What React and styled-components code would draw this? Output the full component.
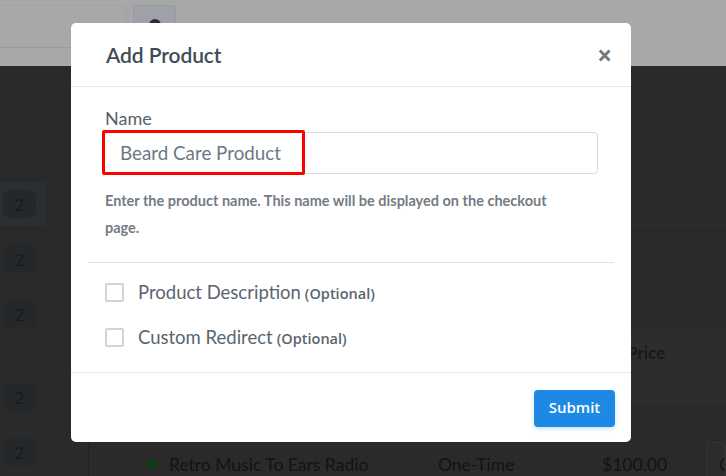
import React from "react";
import styled, { createGlobalStyle } from "styled-components";

const Global = createGlobalStyle`
  html, body { margin: 0; padding: 0; background: #2a2a2a; }
  body { font-family: "Lato", "Open Sans", sans-serif; overflow: hidden; }
  * { box-sizing: border-box; }
`;

const Page = styled.div`
  position: relative;
  width: 726px;
  height: 476px;
  overflow: hidden;
  display: flex;
  flex-direction: column;
  background: #2a2a2a;
`;

const TopBar = styled.div`
  height: 66px;
  flex: none;
  background: #a8a8a8;
  display: flex;
  align-items: flex-start;
  padding-top: 5px;
`;

const SearchField = styled.div`
  width: 127px;
  height: 43px;
  border-bottom: 1px solid #9a9a9a;
  border-right: 1px solid #9f9f9f;
  border-top: 1px solid #a1a1a1;
  border-top-right-radius: 3px;
`;

const SearchButton = styled.div`
  width: 43px;
  height: 43px;
  margin-left: 6px;
  background: #9ea2a8;
  border: 1px solid #9a9ca0;
  border-radius: 3px;
  display: flex;
  justify-content: center;
  padding-top: 13px;
`;

const SearchDot = styled.div`
  width: 12px;
  height: 12px;
  border-radius: 50%;
  background: #2a2d31;
`;

const Main = styled.div`
  flex: 1;
  display: flex;
  min-height: 0;
`;

const Sidebar = styled.div`
  width: 46px;
  flex: none;
  display: flex;
  flex-direction: column;
  padding-top: 93px;
`;

const SideLine = styled.div`
  height: 1px;
  background: #232323;
  margin-bottom: 23px;
`;

const SideRow = styled.div`
  height: 44px;
  flex: none;
  display: flex;
  align-items: center;
  padding-left: 3px;
  margin-bottom: ${(p) => p.$gap || 11}px;
  background: ${(p) => (p.$active ? "#2c2f31" : "transparent")};
`;

const Badge = styled.div`
  width: 33px;
  height: 28px;
  border-radius: 6px;
  background: #25282a;
  color: #17191a;
  font-family: "Open Sans", sans-serif;
  font-size: 17px;
  display: flex;
  align-items: center;
  justify-content: center;
`;

const Content = styled.div`
  flex: 1;
  margin-left: 42px;
  border-left: 1px solid #232323;
  display: flex;
  flex-direction: column;
`;

const TopSection = styled.div`
  height: 165px;
  border-bottom: 1px solid #232323;
  flex: none;
`;

const TableHead = styled.div`
  margin-top: 98px;
  height: 75px;
  flex: none;
  background: #2d2d2d;
  display: grid;
  grid-template-columns: 538px 1fr;
  align-items: start;
  padding-top: 13px;
`;

const HeadCell = styled.div`
  font-family: "Lato", sans-serif;
  font-weight: 700;
  font-size: 17px;
  color: #191919;
`;

const TableRow = styled.div`
  display: grid;
  grid-template-columns: 80px 269px 164px 104px 1fr;
  align-items: center;
  height: 44px;
  flex: none;
  margin-top: 38px;
  font-family: "Lato", sans-serif;
  font-size: 17.5px;
  color: #131313;
`;

const Dot = styled.div`
  justify-self: end;
  margin-right: 12px;
  width: 12px;
  height: 12px;
  border-radius: 50%;
  background: #183a18;
`;

const Cell = styled.div`
  white-space: nowrap;
`;

const CopyBtn = styled.div`
  height: 44px;
  border: 1px solid #353535;
  border-radius: 4px;
  background: #2c2c2c;
  padding-left: 12px;
  display: flex;
  align-items: center;
  color: #161616;
  overflow: hidden;
`;

const Modal = styled.div`
  position: absolute;
  left: 71px;
  top: 23px;
  width: 560px;
  height: 419px;
  background: #fff;
  border-radius: 5px;
  display: flex;
  flex-direction: column;
`;

const ModalHeader = styled.div`
  height: 64px;
  flex: none;
  border-bottom: 1px solid #e6e6e6;
  display: flex;
  align-items: center;
  justify-content: space-between;
  padding: 0 19px 0 35px;
`;

const Title = styled.h4`
  margin: 0;
  font-family: "Lato", sans-serif;
  font-weight: 600;
  font-size: 21px;
  color: #404c58;
  letter-spacing: -0.1px;
`;

const Close = styled.button`
  border: none;
  background: none;
  padding: 0;
  font-family: "Open Sans", sans-serif;
  font-weight: 700;
  font-size: 26px;
  line-height: 1;
  color: #777;
  cursor: pointer;
`;

const ModalBody = styled.div`
  padding: 20px 17px 0;
  flex: 1;
`;

const Field = styled.div`
  padding: 0 16px;
`;

const Label = styled.label`
  display: block;
  font-family: "Lato", sans-serif;
  font-size: 18px;
  color: #56616c;
  line-height: 22px;
  margin-bottom: 3px;
  padding-left: 1px;
`;

const InputWrap = styled.div`
  position: relative;
`;

const Input = styled.input`
  width: 100%;
  height: 42px;
  border: 1px solid #dadada;
  border-radius: 4px;
  padding: 0 15px 2px;
  font-family: "Lato", sans-serif;
  font-size: 18.8px;
  color: #6d7782;
  outline: none;
`;

const Highlight = styled.div`
  position: absolute;
  left: -2px;
  top: -2px;
  width: 203px;
  height: 45px;
  border: 3px solid #f00;
  border-radius: 2px;
  pointer-events: none;
`;

const Help = styled.p`
  margin: 13px 0 0;
  padding-left: 1px;
  max-width: 470px;
  font-family: "Lato", sans-serif;
  font-weight: 700;
  font-size: 14.5px;
  line-height: 27px;
  color: #737c85;
`;

const Divider = styled.hr`
  border: none;
  border-top: 1px solid #e4e4e4;
  margin: 21px 0 19px;
`;

const CheckRow = styled.label`
  display: flex;
  align-items: center;
  gap: 14px;
  height: 20px;
  margin-bottom: 25px;
  padding-left: 1px;
  font-family: "Lato", sans-serif;
  font-size: 18.5px;
  color: #5a6570;
`;

const Box = styled.span`
  width: 19px;
  height: 19px;
  border: 2px solid #d4d4d4;
  border-radius: 2px;
  flex: none;
`;

const Optional = styled.span`
  font-family: "Open Sans", sans-serif;
  font-weight: 600;
  font-size: 14.5px;
  margin-left: 4px;
`;

const ModalFooter = styled.div`
  height: 71px;
  flex: none;
  border-top: 1px solid #e6e6e6;
  display: flex;
  justify-content: flex-end;
  align-items: flex-start;
  padding: 17px 16px 0;
`;

const Submit = styled.button`
  width: 81px;
  height: 37px;
  border: none;
  border-radius: 4px;
  background: #1e88e5;
  color: #fff;
  font-family: "Open Sans", sans-serif;
  font-weight: 600;
  font-size: 15px;
  padding: 0 0 3px;
  box-shadow: 0 2px 4px rgba(30, 136, 229, 0.25);
  cursor: pointer;
`;

const badges = [
  { active: true, gap: 11 },
  { gap: 11 },
  { gap: 39 },
  { gap: 11 },
  { gap: 11 },
];

export default function App() {
  return (
    <>
      <Global />
      <Page>
        <TopBar>
          <SearchField />
          <SearchButton>
            <SearchDot />
          </SearchButton>
        </TopBar>
        <Main>
          <Sidebar>
            <SideLine />
            {badges.map((b, i) => (
              <SideRow key={i} $active={b.active} $gap={b.gap}>
                <Badge>2</Badge>
              </SideRow>
            ))}
          </Sidebar>
          <Content>
            <TopSection />
            <TableHead>
              <div />
              <HeadCell>Price</HeadCell>
            </TableHead>
            <TableRow>
              <Dot />
              <Cell>Retro Music To Ears Radio</Cell>
              <Cell>One-Time</Cell>
              <Cell>$100.00</Cell>
              <CopyBtn>C</CopyBtn>
            </TableRow>
          </Content>
        </Main>

        <Modal role="dialog" aria-label="Add Product">
          <ModalHeader>
            <Title>Add Product</Title>
            <Close aria-label="Close">×</Close>
          </ModalHeader>
          <ModalBody>
            <Field>
              <Label>Name</Label>
              <InputWrap>
                <Input defaultValue="Beard Care Product" />
                <Highlight />
              </InputWrap>
              <Help>
                Enter the product name. This name will be displayed on the checkout page.
              </Help>
            </Field>
            <Divider />
            <Field>
              <CheckRow>
                <Box />
                <span>
                  Product Description<Optional>(Optional)</Optional>
                </span>
              </CheckRow>
              <CheckRow>
                <Box />
                <span>
                  Custom Redirect<Optional>(Optional)</Optional>
                </span>
              </CheckRow>
            </Field>
          </ModalBody>
          <ModalFooter>
            <Submit>Submit</Submit>
          </ModalFooter>
        </Modal>
      </Page>
    </>
  );
}
